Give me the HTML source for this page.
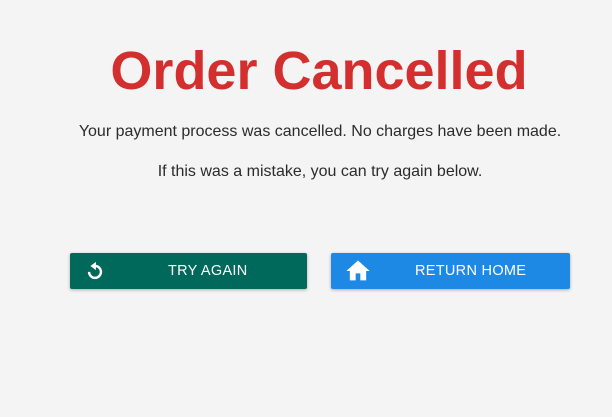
<!DOCTYPE html>
<html><head><style>
body{margin:0;width:612px;height:417px;background:#f4f4f4;font-family:"Liberation Sans",sans-serif;position:relative;overflow:hidden}
h1{position:absolute;top:39px;left:0;width:638px;text-align:center;margin:0;font-size:54px;line-height:64px;color:#d32f2f;font-weight:bold}
.p{position:absolute;left:0;width:640px;text-align:center;font-size:16px;color:#2b2b2b}
.b{position:absolute;top:253px;height:36px;border-radius:2px;box-shadow:0 1px 3px rgba(0,0,0,.3);color:#fff;font-size:14.5px;line-height:36px;letter-spacing:.3px}
.b span{position:absolute;top:0}
.b svg{position:absolute}
</style></head><body>
<h1>Order Cancelled</h1>
<div class="p" style="top:123px">Your payment process was cancelled. No charges have been made.</div>
<div class="p" style="top:163px">If this was a mistake, you can try again below.</div>
<div class="b" style="left:70px;width:237px;background:#00695c">
<svg style="left:14px;top:7px" width="22" height="22" viewBox="0 0 24 24"><path d="M12 6.5A6.5 6.5 0 1 1 5.5 13" fill="none" stroke="#fff" stroke-width="2.6"/><polygon points="13,2 13,11 7,6.5" fill="#fff"/></svg>
<span style="left:98px">TRY AGAIN</span></div>
<div class="b" style="left:331px;width:239px;background:#1e88e5">
<svg style="left:13px;top:4px" width="28" height="28" viewBox="0 0 24 24"><path d="M10 20v-6h4v6h5v-8h3L12 3 2 12h3v8z" fill="#fff"/></svg>
<span style="left:84px">RETURN HOME</span></div>
</body></html>
